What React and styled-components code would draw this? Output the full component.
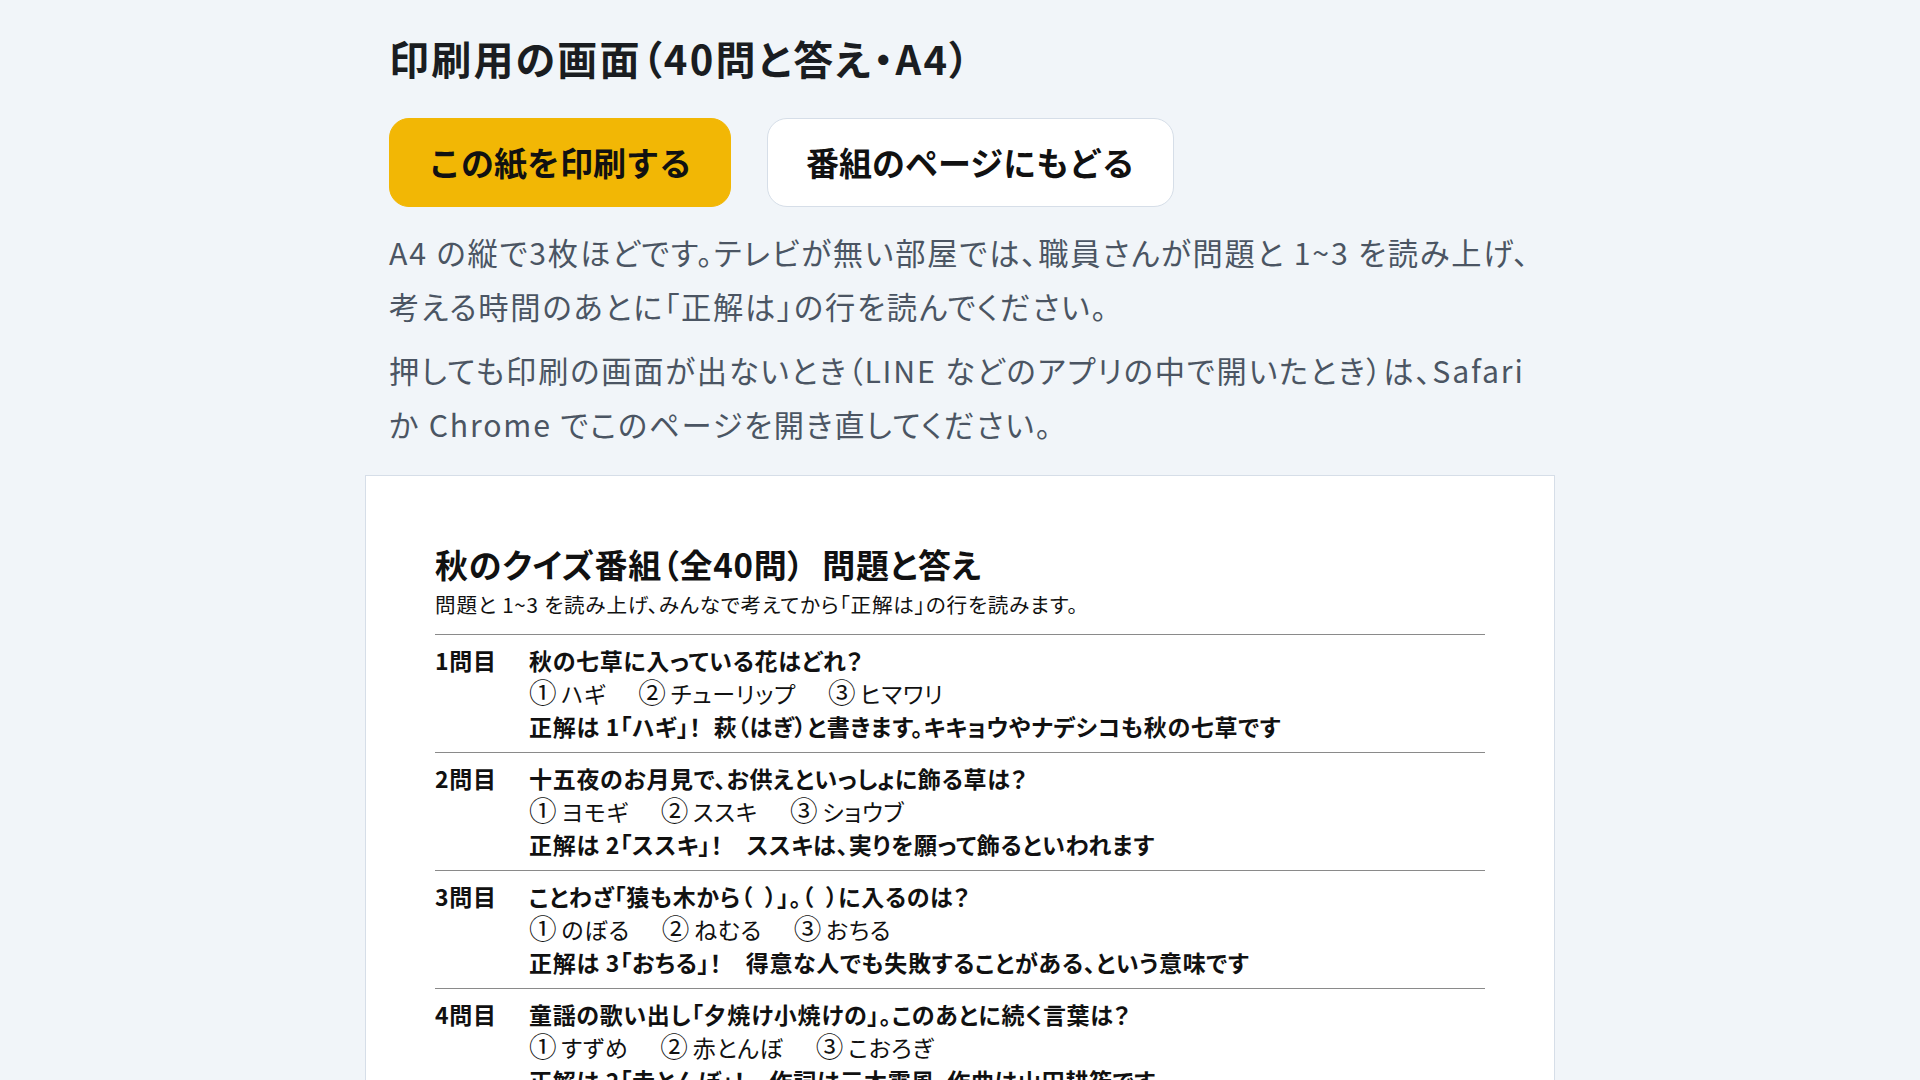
import React from "react";
import styled, { createGlobalStyle } from "styled-components";

const colors = {
  page: "#f1f5f9",
  ink: "#111111",
  muted: "#4b5563",
  yellow: "#f2b705",
  line: "#d6dee8",
  rule: "#8a8a8a"
};

const GlobalStyle = createGlobalStyle`
  body {
    margin: 0;
    background: ${colors.page};
    color: ${colors.ink};
    font-family: "Noto Sans CJK JP", "Noto Sans", sans-serif;
    font-feature-settings: "palt";
    letter-spacing: 0.05em;
  }
`;

const Page = styled.div`
  max-width: 1190px;
  margin: 0 auto;
  padding-top: 31px;
`;

const Intro = styled.section`
  padding: 0 24px 24px;
`;

const Title = styled.h1`
  margin: 0;
  font-size: 40px;
  line-height: 54px;
  font-weight: 700;
  letter-spacing: 0.055em;
  color: #1a1d21;
`;

const Actions = styled.div`
  display: flex;
  gap: 36px;
  margin-top: 33px;
`;

const Button = styled.button`
  font-family: inherit;
  font-feature-settings: normal;
  letter-spacing: normal;
  font-size: 33px;
  font-weight: 700;
  line-height: 45px;
  padding: 21px 38px;
  border-radius: 20px;
  cursor: pointer;
  color: ${colors.ink};
  background: ${(p) => (p.$primary ? colors.yellow : "#ffffff")};
  border: 1px solid ${(p) => (p.$primary ? colors.yellow : colors.line)};
`;

const Notes = styled.div`
  margin-top: 18px;
`;

const Note = styled.p`
  margin: 0;
  font-size: 30.25px;
  line-height: 54px;
  letter-spacing: 0.06em;
  color: ${colors.muted};

  & + & {
    margin-top: 10px;
  }
`;

const Paper = styled.article`
  background: #ffffff;
  border: 1px solid ${colors.line};
  padding: 66px 69px 80px;
`;

const SheetHead = styled.header`
  padding-bottom: 16px;
  border-bottom: 1px solid ${colors.rule};
`;

const SheetTitle = styled.h2`
  margin: 0;
  font-size: 33px;
  line-height: 45px;
  font-weight: 700;
`;

const SheetLead = styled.p`
  margin: 3px 0 0;
  font-size: 20.6px;
  line-height: 28px;
`;

const Row = styled.div`
  display: grid;
  grid-template-columns: 94px 1fr;
  padding: 9px 0;
  border-bottom: 1px solid ${colors.rule};
  font-size: 23px;
  line-height: 33px;
  letter-spacing: 0.03em;
`;

const Num = styled.div`
  font-weight: 700;
`;

const Line = styled.div`
  font-weight: ${(p) => (p.$bold ? 700 : 400)};
`;

const Choice = styled.span`
  margin-right: 32px;

  &:last-child {
    margin-right: 0;
  }
`;

const Mark = styled.span`
  font-size: 1.2em;
  line-height: 1;
  margin-right: 4px;
`;

const questions = [
  {
    q: "秋の七草に入っている花はどれ？",
    choices: ["ハギ", "チューリップ", "ヒマワリ"],
    a: "正解は 1「ハギ」！\u2002萩（はぎ）と書きます。キキョウやナデシコも秋の七草です"
  },
  {
    q: "十五夜のお月見で、お供えといっしょに飾る草は？",
    choices: ["ヨモギ", "ススキ", "ショウブ"],
    a: "正解は 2「ススキ」！　ススキは、実りを願って飾るといわれます"
  },
  {
    q: "ことわざ「猿も木から（\u2002）」。（\u2002）に入るのは？",
    choices: ["のぼる", "ねむる", "おちる"],
    a: "正解は 3「おちる」！　得意な人でも失敗することがある、という意味です"
  },
  {
    q: "童謡の歌い出し「夕焼け小焼けの」。このあとに続く言葉は？",
    choices: ["すずめ", "赤とんぼ", "こおろぎ"],
    a: "正解は 2「赤とんぼ」！　作詞は三木露風、作曲は山田耕筰です"
  },
  {
    q: "秋においしくなる魚で、漢字で「秋刀魚」と書くのは？",
    choices: ["サンマ", "マグロ", "タイ"],
    a: "正解は 1「サンマ」！　刀のように細長い形から、この字になりました"
  },
  {
    q: "木の葉が赤や黄色に色づくことを何という？",
    choices: ["紅葉", "若葉", "落葉"],
    a: "正解は 1「紅葉」！　「こうよう」とも「もみじ」とも読みます"
  }
];

const marks = ["①", "②", "③"];

export default function App() {
  return (
    <>
      <GlobalStyle />
      <Page>
        <Intro>
          <Title>印刷用の画面（40問と答え・A4）</Title>
          <Actions>
            <Button $primary>この紙を印刷する</Button>
            <Button>番組のページにもどる</Button>
          </Actions>
          <Notes>
            <Note>
              A4 の縦で3枚ほどです。テレビが無い部屋では、職員さんが問題と 1~3 を読み上げ、考える時間のあとに「正解は」の行を読んでください。
            </Note>
            <Note>
              押しても印刷の画面が出ないとき（LINE などのアプリの中で開いたとき）は、Safari か Chrome でこのページを開き直してください。
            </Note>
          </Notes>
        </Intro>
        <Paper>
          <SheetHead>
            <SheetTitle>秋のクイズ番組（全40問）{"\u2002"}問題と答え</SheetTitle>
            <SheetLead>問題と 1~3 を読み上げ、みんなで考えてから「正解は」の行を読みます。</SheetLead>
          </SheetHead>
          {questions.map((item, i) => (
            <Row key={i}>
              <Num>{i + 1}問目</Num>
              <div>
                <Line $bold>{item.q}</Line>
                <Line>
                  {item.choices.map((c, j) => (
                    <Choice key={j}>
                      <Mark>{marks[j]}</Mark>
                      {c}
                    </Choice>
                  ))}
                </Line>
                <Line $bold>{item.a}</Line>
              </div>
            </Row>
          ))}
        </Paper>
      </Page>
    </>
  );
}
